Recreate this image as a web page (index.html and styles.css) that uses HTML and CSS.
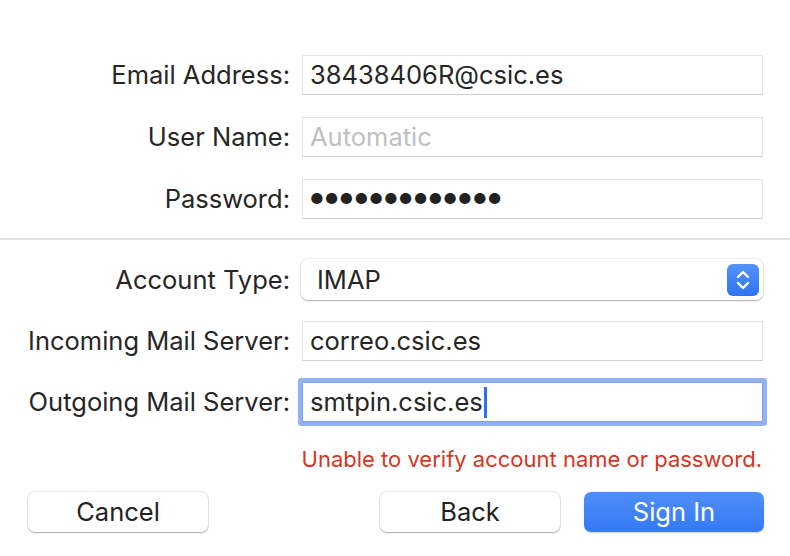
FILE: index.html
```html
<!DOCTYPE html>
<html lang="en">
<head>
<meta charset="utf-8">
<title>Account setup</title>
<link rel="stylesheet" href="styles.css">
</head>
<body>
<div class="sheet">
  <div class="grid grid-top">
    <div class="label">Email Address:</div>
    <div class="field">38438406R@csic.es</div>
    <div class="label">User Name:</div>
    <div class="field placeholder">Automatic</div>
    <div class="label">Password:</div>
    <div class="field dots">●●●●●●●●●●●●●</div>
  </div>
  <div class="separator"></div>
  <div class="grid grid-bottom">
    <div class="label">Account Type:</div>
    <div class="popup">
      <span class="popup-text">IMAP</span>
      <span class="stepper">
        <svg width="32" height="32" viewBox="0 0 32 32" aria-hidden="true">
          <path d="M11 13 L16 8 L21 13" fill="none" stroke="#fff" stroke-width="2.4" stroke-linecap="round" stroke-linejoin="round"/>
          <path d="M11 19 L16 24 L21 19" fill="none" stroke="#fff" stroke-width="2.4" stroke-linecap="round" stroke-linejoin="round"/>
        </svg>
      </span>
    </div>
    <div class="label">Incoming Mail Server:</div>
    <div class="field">correo.csic.es</div>
    <div class="label">Outgoing Mail Server:</div>
    <div class="field focused">smtpin.csic.es<span class="caret"></span></div>
  </div>
  <div class="error">Unable to verify account name or password.</div>
  <div class="buttons">
    <div class="btn">Cancel</div>
    <div class="btn-group">
      <div class="btn">Back</div>
      <div class="btn primary">Sign In</div>
    </div>
  </div>
</div>
</body>
</html>
```

FILE: styles.css
```css
html, body {
  margin: 0;
  padding: 0;
  background: #ffffff;
}

body {
  font-family: Inter, "Liberation Sans", sans-serif;
  color: #262626;
  font-size: 25.5px;
}

.sheet {
  width: 790px;
  height: 556px;
  overflow: hidden;
}

.grid {
  display: grid;
  grid-template-columns: 290px 461px;
  column-gap: 12px;
  align-items: center;
}

.grid-top {
  padding-top: 55px;
  row-gap: 22px;
}

.grid-bottom {
  margin-top: 19px;
  row-gap: 21px;
}

.label {
  text-align: right;
  white-space: nowrap;
  line-height: 40px;
}

.field {
  box-sizing: border-box;
  height: 40px;
  border: 1px solid #e4e4e4;
  border-bottom-color: #cfcfcf;
  border-radius: 1px;
  padding-left: 7px;
  line-height: 38px;
  white-space: nowrap;
  background: #fff;
  display: flex;
  align-items: center;
}

.placeholder {
  color: #c0c0c0;
}

.dots {
  font-size: 15px;
  letter-spacing: 1.1px;
  color: #222;
}

.focused {
  border-color: #7c9ff0;
  box-shadow: 0 0 0 4px #93b2f4;
}

.caret {
  display: inline-block;
  width: 3px;
  height: 31px;
  background: #2f6ff3;
  margin-left: 1px;
}

.separator {
  margin-top: 19px;
  height: 2px;
  background: #e3e3e3;
}

.popup {
  box-sizing: border-box;
  height: 41px;
  border-radius: 7px;
  background: #fff;
  box-shadow: 0 0 0 1px rgba(0, 0, 0, 0.06), 0 1px 1.5px rgba(0, 0, 0, 0.28);
  display: flex;
  align-items: center;
  justify-content: space-between;
  padding: 0 4px 0 16px;
  margin-left: -1px;
}

.stepper {
  width: 32px;
  height: 32px;
  border-radius: 6px;
  background: linear-gradient(#5393f8, #2f73f5);
  display: block;
}

.stepper svg {
  display: block;
}

.error {
  margin-top: 24px;
  padding-right: 28px;
  text-align: right;
  color: #d7351f;
  font-size: 22px;
  line-height: 26px;
}

.buttons {
  margin-top: 20px;
  padding: 0 26px 0 28px;
  display: flex;
  justify-content: space-between;
}

.btn-group {
  display: flex;
  gap: 24px;
}

.btn {
  box-sizing: border-box;
  width: 180px;
  height: 40px;
  border-radius: 7px;
  background: #fff;
  box-shadow: 0 0 0 1px rgba(0, 0, 0, 0.07), 0 1px 1.5px rgba(0, 0, 0, 0.28);
  text-align: center;
  line-height: 40px;
  color: #222;
}

.primary {
  background: linear-gradient(#4f8ff8, #3479f6);
  color: #fff;
  box-shadow: 0 1px 1.5px rgba(0, 0, 0, 0.2);
}
```
